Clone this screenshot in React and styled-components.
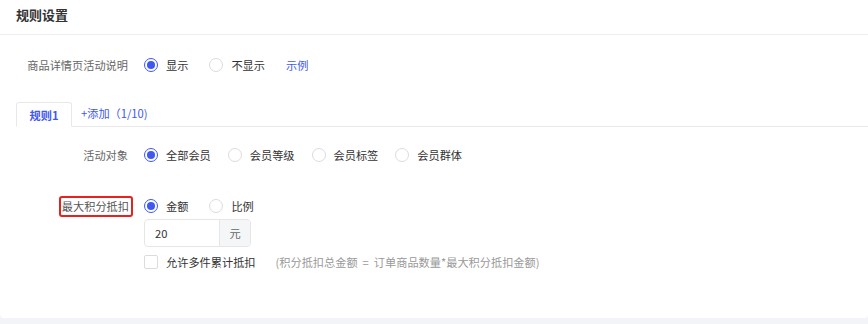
import styled, { createGlobalStyle } from "styled-components";

const GlobalStyle = createGlobalStyle`
  body {
    margin: 0;
    background: #f3f4f8;
    font-family: "Noto Sans CJK SC", "Noto Sans", sans-serif;
    font-size: 11.2px;
  }
`;

const BLUE = "#4058f2";

const Card = styled.div`
  background: #fff;
  padding-bottom: 45px;
  border-radius: 0 0 4px 4px;
`;
const Header = styled.div`
  height: 34px;
  line-height: 30px;
  padding-left: 16px;
  font-size: 13px;
  font-weight: 600;
  color: #333;
  border-bottom: 1px solid #eeeeee;
`;
const Body = styled.div`
  padding-left: 16px;
`;
const Row = styled.div`
  display: flex;
  align-items: ${(p) => (p.top ? "flex-start" : "center")};
  margin-top: ${(p) => p.mt || 0}px;
  min-height: ${(p) => p.h || 28}px;
`;
const Label = styled.div`
  width: ${(p) => p.w || 112}px;
  flex-shrink: 0;
  text-align: right;
  color: #666;
  margin-right: 16px;
  line-height: ${(p) => p.lh || 28}px;
`;
const Highlight = styled.span`
  display: inline-block;
  border: 2px solid #e8201e;
  border-radius: 3px;
  line-height: 17px;
  padding: 0 2px 0 1px;
  color: #555;
  margin-right: -5px;
`;
const Options = styled.div`
  display: flex;
  align-items: center;
  gap: ${(p) => p.gap || 21}px;
  height: ${(p) => p.h || 28}px;
`;
const Option = styled.label`
  display: flex;
  align-items: center;
  gap: 8px;
  color: #333;
`;
const Circle = styled.span`
  box-sizing: border-box;
  width: 14px;
  height: 14px;
  border-radius: 50%;
  border: 1px solid ${(p) => (p.checked ? BLUE : "#dcdcdc")};
  display: flex;
  align-items: center;
  justify-content: center;
  &::after {
    content: "";
    width: 8px;
    height: 8px;
    border-radius: 50%;
    background: ${(p) => (p.checked ? BLUE : "transparent")};
  }
`;
const Link = styled.a`
  color: ${BLUE};
  text-decoration: none;
`;
const TabBar = styled.div`
  display: flex;
  align-items: flex-end;
  margin-top: 23px;
  border-bottom: 1px solid #e8e8e8;
  height: 24px;
`;
const Tab = styled.div`
  box-sizing: border-box;
  width: 56px;
  height: 25px;
  margin-bottom: -1px;
  border: 1px solid #e8e8e8;
  border-bottom-color: #fff;
  border-radius: 3px 3px 0 0;
  background: #fff;
  color: ${BLUE};
  font-weight: 600;
  text-align: center;
  line-height: 25px;
`;
const AddTab = styled.span`
  color: ${BLUE};
  margin-left: 9px;
  align-self: center;
  margin-top: -2px;
`;
const Controls = styled.div`
  display: flex;
  flex-direction: column;
`;
const InputGroup = styled.div`
  display: flex;
  margin-top: 1px;
  height: 28px;
  width: 107px;
  box-sizing: border-box;
  border: 1px solid #e6e6e6;
  border-radius: 4px;
  overflow: hidden;
`;
const Input = styled.div`
  flex: 1;
  padding-left: 10px;
  line-height: 26px;
  color: #333;
`;
const Addon = styled.div`
  width: 30px;
  border-left: 1px solid #e6e6e6;
  background: #f5f6f8;
  color: #666;
  text-align: center;
  line-height: 26px;
`;
const CheckRow = styled.div`
  display: flex;
  align-items: center;
  height: 22px;
  margin-top: 4px;
  color: #333;
`;
const Box = styled.span`
  box-sizing: border-box;
  width: 14px;
  height: 14px;
  border: 1px solid #dcdcdc;
  border-radius: 2px;
  margin-right: 8px;
`;
const Hint = styled.span`
  color: #999;
  margin-left: 20px;
  white-space: pre;
`;

function Radio({ checked, children }) {
  return (
    <Option>
      <Circle checked={checked} />
      {children}
    </Option>
  );
}

export default function App() {
  return (
    <>
      <GlobalStyle />
      <Card>
        <Header>规则设置</Header>
        <Body>
          <Row mt={16}>
            <Label>商品详情页活动说明</Label>
            <Options>
              <Radio checked>显示</Radio>
              <Radio>不显示</Radio>
              <Link>示例</Link>
            </Options>
          </Row>
          <TabBar>
            <Tab>规则1</Tab>
            <AddTab>+添加（1/10)</AddTab>
          </TabBar>
          <Row mt={14}>
            <Label>活动对象</Label>
            <Options gap={17}>
              <Radio checked>全部会员</Radio>
              <Radio>会员等级</Radio>
              <Radio>会员标签</Radio>
              <Radio>会员群体</Radio>
            </Options>
          </Row>
          <Row mt={25} top>
            <Label lh={24}>
              <Highlight>最大积分抵扣</Highlight>
            </Label>
            <Controls>
              <Options h={24}>
                <Radio checked>金额</Radio>
                <Radio>比例</Radio>
              </Options>
              <InputGroup>
                <Input>20</Input>
                <Addon>元</Addon>
              </InputGroup>
              <CheckRow>
                <Box />
                允许多件累计抵扣
                <Hint>(积分抵扣总金额  =  订单商品数量*最大积分抵扣金额)</Hint>
              </CheckRow>
            </Controls>
          </Row>
        </Body>
      </Card>
    </>
  );
}
